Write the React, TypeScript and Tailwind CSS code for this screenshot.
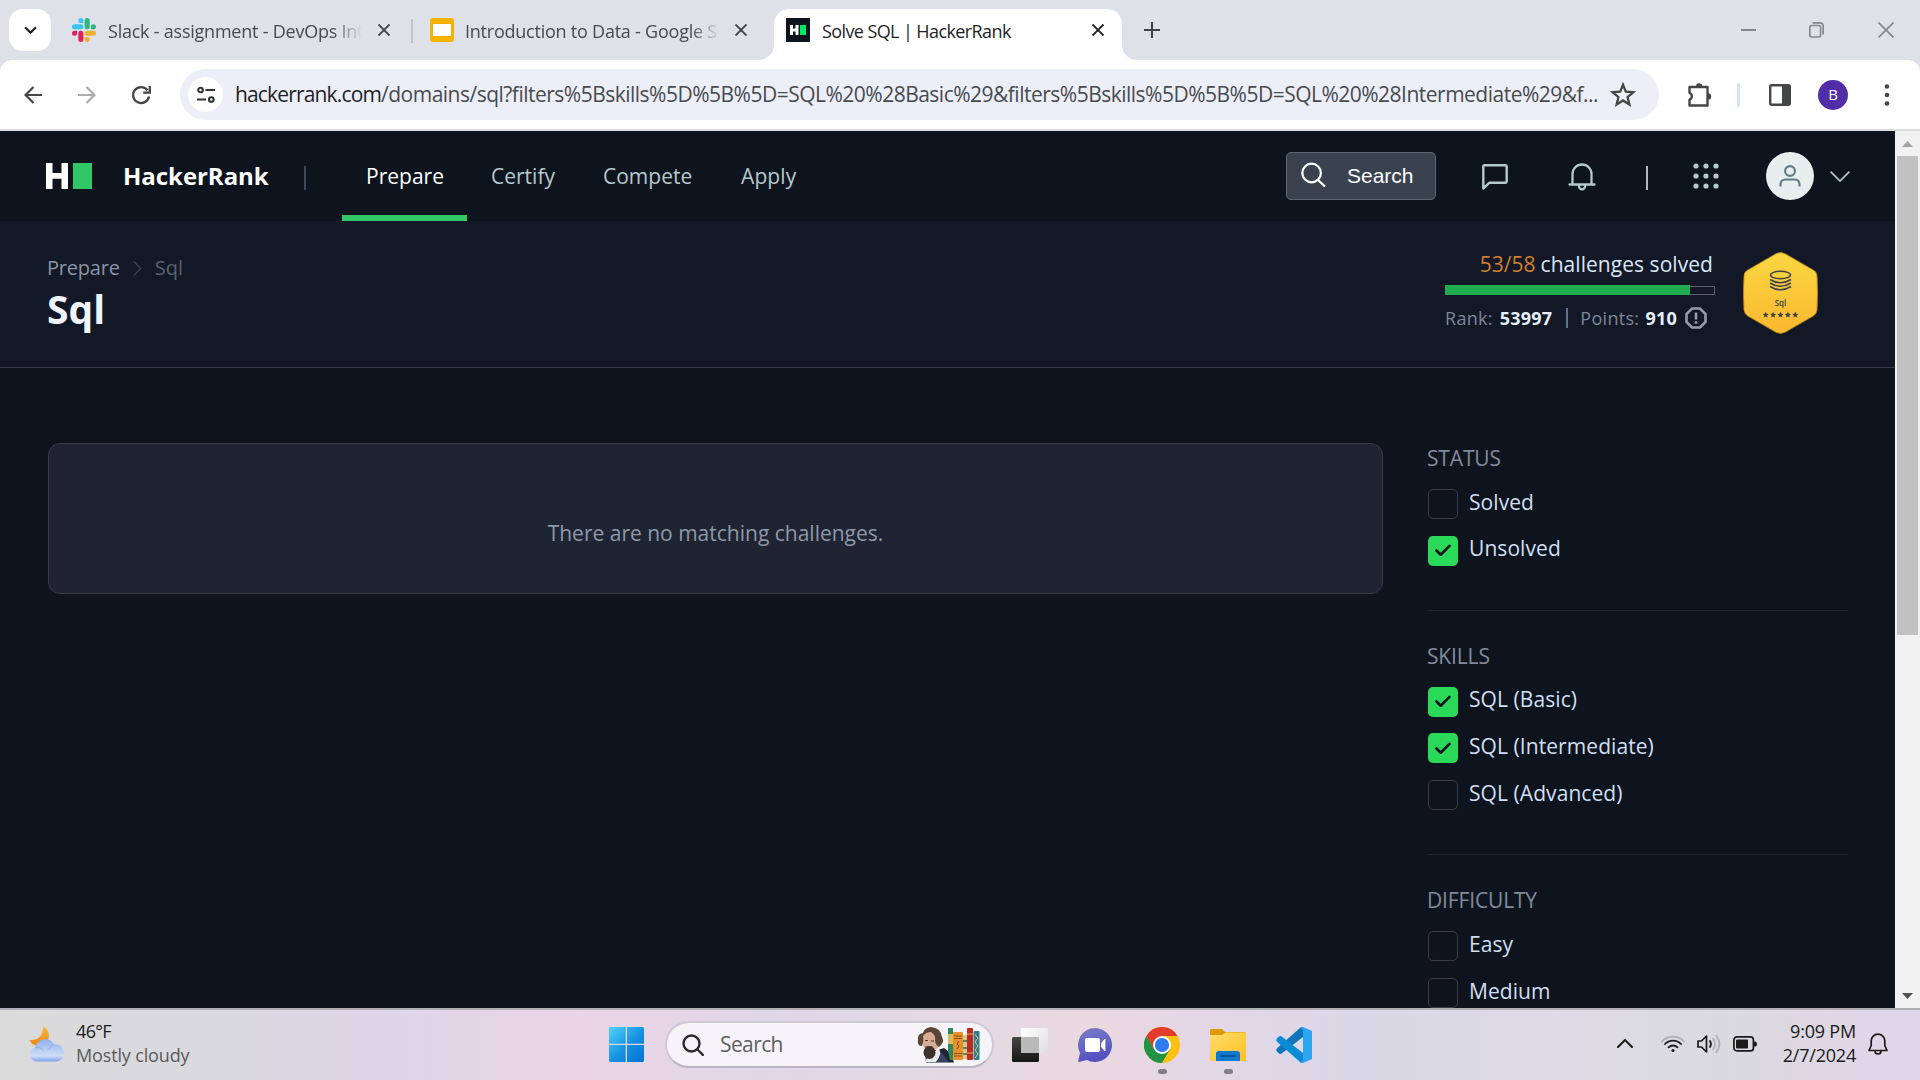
import type { ReactNode } from "react";

function SlackIcon() {
  return (
    <svg viewBox="0 0 24 24" className="size-6 shrink-0">
      <path fill="#E01E5A" d="M5.042 15.165a2.528 2.528 0 0 1-2.52 2.523A2.528 2.528 0 0 1 0 15.165a2.527 2.527 0 0 1 2.522-2.52h2.52v2.52zM6.313 15.165a2.527 2.527 0 0 1 2.521-2.52 2.527 2.527 0 0 1 2.521 2.52v6.313A2.528 2.528 0 0 1 8.834 24a2.528 2.528 0 0 1-2.521-2.522v-6.313z" />
      <path fill="#36C5F0" d="M8.834 5.042a2.528 2.528 0 0 1-2.521-2.52A2.528 2.528 0 0 1 8.834 0a2.528 2.528 0 0 1 2.521 2.522v2.52H8.834zM8.834 6.313a2.528 2.528 0 0 1 2.521 2.521 2.528 2.528 0 0 1-2.521 2.521H2.522A2.528 2.528 0 0 1 0 8.834a2.528 2.528 0 0 1 2.522-2.521h6.312z" />
      <path fill="#2EB67D" d="M18.956 8.834a2.528 2.528 0 0 1 2.522-2.521A2.528 2.528 0 0 1 24 8.834a2.528 2.528 0 0 1-2.522 2.521h-2.522V8.834zM17.688 8.834a2.528 2.528 0 0 1-2.523 2.521 2.527 2.527 0 0 1-2.52-2.521V2.522A2.527 2.527 0 0 1 15.165 0a2.528 2.528 0 0 1 2.523 2.522v6.312z" />
      <path fill="#ECB22E" d="M15.165 18.956a2.528 2.528 0 0 1 2.523 2.522A2.528 2.528 0 0 1 15.165 24a2.527 2.527 0 0 1-2.52-2.522v-2.522h2.52zM15.165 17.688a2.527 2.527 0 0 1-2.52-2.523 2.526 2.526 0 0 1 2.52-2.52h6.313A2.527 2.527 0 0 1 24 15.165a2.528 2.528 0 0 1-2.522 2.523h-6.313z" />
    </svg>
  );
}

function CloseX({ color }: { color: string }) {
  return (
    <svg viewBox="0 0 12 12" className="size-3 shrink-0" fill="none" stroke={color} strokeWidth="1.9">
      <path d="M0.5 0.5 11.5 11.5M11.5 0.5 0.5 11.5" />
    </svg>
  );
}

function TabStrip() {
  return (
    <div className="flex h-[60px] shrink-0 bg-[#dee1e8] text-[18px] text-[#484a4c]">
      <div className="ml-[9px] mt-[9px] flex h-[42px] w-[42px] items-center justify-center rounded-[14px] bg-white">
        <svg viewBox="0 0 14 10" className="h-[9px] w-[13px]" fill="none" stroke="#1f1f1f" strokeWidth="2.4">
          <path d="M1 1.5 7 7.5 13 1.5" />
        </svg>
      </div>
      <div className="ml-[21px] flex h-[60px] w-[339px] items-center">
        <SlackIcon />
        <div className="ml-[12px] mt-[2px] w-[256px] whitespace-pre tracking-[-0.23px] [mask-image:linear-gradient(to_right,#000_225px,transparent_254px)]">
          Slack - assignment - DevOps Int
        </div>
        <div className="ml-[14px] flex"><CloseX color="#3f4143" /></div>
      </div>
      <div className="mt-[19px] h-6 w-[2px] bg-[#c2c5cb]" />
      <div className="ml-[17px] flex h-[60px] w-[329px] items-center">
        <div className="h-6 w-6 shrink-0 rounded-[3px] bg-[#f6b400] px-[3px] pt-[6px]">
          <div className="h-[12px] bg-white shadow-[0_0_1px_#c98f00]" />
        </div>
        <div className="ml-[11px] mt-[2px] w-[256px] whitespace-pre tracking-[-0.23px] [mask-image:linear-gradient(to_right,#000_225px,transparent_256px)]">
          Introduction to Data - Google S
        </div>
        <div className="ml-[14px] flex"><CloseX color="#3f4143" /></div>
      </div>
      <div className="flex items-end text-[#1f1f1f]">
        <svg viewBox="0 0 15 15" className="size-[15px]"><path d="M15 0V15H0A15 15 0 0 0 15 0Z" fill="#fff" /></svg>
        <div className="flex h-[51px] w-[348px] items-center rounded-t-[15px] bg-white pb-[9px] pl-3">
          <div className="flex h-6 w-6 items-center bg-[#0e141e] pl-1">
            <svg viewBox="0 0 17 10" className="h-[10px] w-[17px]">
              <path d="M0 0H3V3.5H5.5V0H8.5V10H5.5V6.5H3V10H0Z" fill="#fff" />
              <path d="M10 0H16V10H10Z" fill="#00ea64" />
            </svg>
          </div>
          <div className="ml-[12px] mt-[2px] w-[270px] whitespace-pre tracking-[-0.6px]">Solve SQL | HackerRank</div>
          <CloseX color="#1f1f1f" />
        </div>
        <svg viewBox="0 0 15 15" className="size-[15px]"><path d="M0 0V15H15A15 15 0 0 1 0 0Z" fill="#fff" /></svg>
      </div>
      <svg viewBox="0 0 16 16" className="ml-[7px] mt-[22px] size-4" stroke="#3f4143" strokeWidth="2.1"><path d="M8 0V16M0 8H16" /></svg>
      <div className="ml-auto flex w-[179px] items-center pb-px text-[#83868b]">
        <svg viewBox="0 0 15 2" className="h-[2px] w-[15px]"><path d="M0 0H15V2H0Z" fill="#83868b" /></svg>
        <svg viewBox="0 0 15 16" className="ml-[53px] h-4 w-[15px]" fill="none" stroke="#83868b" strokeWidth="1.6">
          <rect x="0.8" y="3.5" width="10.8" height="11.5" rx="2" />
          <path d="M3.5 0.9H10.5Q14.2 0.9 14.2 4.5V12.5" />
        </svg>
        <svg viewBox="0 0 16 16" className="ml-[54px] size-4" fill="none" stroke="#83868b" strokeWidth="1.6"><path d="M0.5 0.5 15.5 15.5M15.5 0.5 0.5 15.5" /></svg>
      </div>
    </div>
  );
}

function Toolbar() {
  return (
    <div className="h-[71px] shrink-0 border-b-2 border-[#dcdddf] bg-[#dee1e8] text-[21px]">
      <div className="flex h-[69px] items-center rounded-t-[12px] bg-white">
        <svg viewBox="0 0 18 18" className="ml-6 size-[18px]" fill="none" stroke="#444746" strokeWidth="2.2"><path d="M18 9H2M9.5 1 1.5 9l8 8" /></svg>
        <svg viewBox="0 0 18 18" className="ml-9 size-[18px]" fill="none" stroke="#acadae" strokeWidth="2.2"><path d="M0 9H16M8.500 1 16.500 9l-8 8" /></svg>
        <svg viewBox="0 0 20 20" className="ml-[35px] size-5" fill="none" stroke="#444746" strokeWidth="2.3"><path d="M18 11.500A8 8 0 1 1 16.500 5.200M18.800 1V7.700H12.200" /></svg>
        <div className="ml-[29px] flex h-[51px] w-[1479px] items-center rounded-full bg-[#eceef8] pl-2">
          <div className="flex size-[35px] shrink-0 items-center justify-center rounded-full bg-white">
            <svg viewBox="0 0 18 18" className="size-[18px]" fill="none" stroke="#2f3133" strokeWidth="2.100">
              <circle cx="3.500" cy="4" r="2.300" /><path d="M8.500 4H18M0 13.500H9" /><circle cx="14.300" cy="13.500" r="2.300" />
            </svg>
          </div>
          <div className="ml-3 flex w-[1370px] whitespace-pre text-[#494b4e]">
            <span className="tracking-[-0.84px] text-[#1f1f1f]">hackerrank.com</span>
            <span className="tracking-[-0.51px]">/domains/sql?filters%5Bskills%5D%5B%5D=SQL%20%28Basic%29&amp;filters%5Bskills%5D%5B%5D=SQL%20%28Intermediate%29&amp;f...</span>
          </div>
          <svg viewBox="0 0 24 24" className="ml-[5px] h-[26px] w-[26px] shrink-0" fill="none" stroke="#444746" strokeWidth="2.100" strokeLinejoin="miter">
            <path d="M12 2.500 14.600 8.900 21.500 9.400 16.200 13.900 17.900 20.700 12 17 6.100 20.700 7.800 13.900 2.500 9.400 9.400 8.900Z" />
          </svg>
        </div>
        <svg viewBox="0 0 26 26" className="ml-[28px] size-[26px]" fill="none" stroke="#444746" strokeWidth="2.400" strokeLinejoin="round">
          <path d="M2.500 5H20.500V23.500H2.500V17.500A3.600 3.600 0 0 0 2.500 10.800Z" />
          <path d="M9 4.500A3.200 3.200 0 0 1 15.400 4.500ZM21 11.200A3.200 3.200 0 0 1 21 17.600Z" fill="#444746" stroke="none" />
        </svg>
        <div className="ml-[24px] h-6 w-[3px] rounded-full bg-[#d3e3fd]" />
        <svg viewBox="0 0 22 22" className="ml-[29px] size-[22px]" fill="none" stroke="#444746" strokeWidth="2.400">
          <rect x="1.200" y="1.200" width="19.600" height="19.600" rx="1.500" /><path d="M13 1H20.500V21H13Z" fill="#444746" stroke="none" />
        </svg>
        <div className="ml-[27px] flex size-[30px] items-center justify-center rounded-full bg-[#512da8] text-[15px] text-white">B</div>
        <svg viewBox="0 0 6 22" className="ml-[36px] h-[22px] w-[6px]" fill="#444746"><circle cx="3" cy="2.500" r="2.300" /><circle cx="3" cy="11" r="2.300" /><circle cx="3" cy="19.500" r="2.300" /></svg>
      </div>
    </div>
  );
}

function NavBar() {
  return (
    <div className="flex h-[90px] shrink-0 items-center bg-[#0e141e] text-[21px] text-[#b7c9cc]">
      <svg viewBox="0 0 46 26" className="ml-[46px] h-[26px] w-[46px]">
        <path d="M0 0H6.500V10H15.500V0H22V26H15.500V15.800H6.500V26H0Z" fill="#fff" />
        <path d="M27 0H46V26H27Z" fill="#32c766" />
      </svg>
      <div className="ml-[31px] w-[146px] text-[24px] font-bold tracking-[-0.050px] text-white">HackerRank</div>
      <div className="ml-[35px] mt-[4px] h-6 w-[2px] bg-[#3b4a58]" />
      <div className="ml-9 flex h-[90px] w-[125px] items-center justify-center border-b-[6px] border-[#32c766] pl-px pt-[8px] text-white">Prepare</div>
      <div className="ml-6 w-[64px] pt-[2px]">Certify</div>
      <div className="ml-[48px] w-[91px] pt-[2px]">Compete</div>
      <div className="ml-[47px] pt-[2px] tracking-[0.100px]">Apply</div>
      <div className="ml-auto flex h-12 w-[150px] items-center rounded-[5px] border border-[#5b6874] bg-[#39424e] font-['Liberation_Sans'] text-white">
        <svg viewBox="0 0 25 25" className="mb-[3px] ml-[14px] size-[25px]" fill="none" stroke="#fff" strokeWidth="2.200"><circle cx="10.600" cy="11" r="9.300" /><path d="M17 18 24 24.500" /></svg>
        <span className="ml-[21px]">Search</span>
      </div>
      <svg viewBox="0 0 26 28" className="ml-[46px] mt-[2px] h-7 w-[26px]" fill="none" stroke="#b7c9cc" strokeWidth="2.400" strokeLinejoin="round"><path d="M1.300 25.500V3.500Q1.300 2.300 2.500 2.300H23.500Q24.700 2.300 24.700 3.500V18.500Q24.700 19.700 23.500 19.700H7.500Z" /></svg>
      <svg viewBox="0 0 28 28" className="ml-[60px] mt-px size-7" fill="none" stroke="#b7c9cc" strokeWidth="2.300" strokeLinejoin="round" strokeLinecap="round">
        <path d="M1.500 21.500H26.500M4.500 21V11A9.500 9.500 0 0 1 23.500 11V21M10.800 22.500A3.200 3.800 0 0 0 17.200 22.500" />
      </svg>
      <div className="ml-[50px] mt-[4px] h-6 w-[2px] bg-[#a9bcc4]" />
      <svg viewBox="0 0 26 26" className="ml-[45px] size-[26px]" fill="#b7c9cc">
        {[3, 13, 23].map((y) => [3, 13, 23].map((x) => <circle key={`${x}-${y}`} cx={x} cy={y} r="2.600" />))}
      </svg>
      <div className="ml-[47px] flex size-12 items-center justify-center rounded-full bg-[#e7eeef]">
        <svg viewBox="0 0 22 24" className="h-6 w-[22px]" fill="none" stroke="#647b83" strokeWidth="2.100"><circle cx="11" cy="7" r="4.900" /><path d="M1.500 22.500V20.500Q1.500 15.500 6.500 15.500H15.500Q20.500 15.500 20.500 20.500V22.500" /></svg>
      </div>
      <svg viewBox="0 0 20 11" className="ml-4 mr-[45px] h-[11px] w-5" fill="none" stroke="#b7c9cc" strokeWidth="1.700"><path d="M0.600 0.600 10 10 19.400 0.600" /></svg>
    </div>
  );
}

function Badge() {
  return (
    <div className="relative flex h-[82px] w-[75px] flex-col items-center">
      <svg viewBox="0 0 75 82" className="absolute inset-0 h-[82px] w-[75px]">
        <defs><linearGradient id="gold" x1="0" y1="0" x2="0" y2="1"><stop offset="0" stopColor="#fbd741" /><stop offset="1" stopColor="#f9b830" /></linearGradient></defs>
        <path d="M33 1.700Q37.500-0.500 42 1.700L71 18.500Q74 20.500 74 24Q75 41 74 58Q73.500 61.500 71 63.500L42 80.300Q37.500 82.500 33 80.300L4 63.500Q1.500 61.500 1 58Q0 41 1 24Q1 20.500 4 18.500Z" fill="url(#gold)" stroke="#b98a1c" strokeWidth="0.800" />
        <g fill="none" stroke="#39424e" strokeWidth="1.500">
          <ellipse cx="37.500" cy="23" rx="10" ry="3.700" />
          <path d="M27 27.500Q37.500 34 48 27.500M27 31Q37.500 37.500 48 31M27 34.500Q37.500 41 48 34.500" />
        </g>
        <g fill="#39424e">
          {[22.700, 30.100, 37.500, 44.900, 52.300].map((x) => (
            <path key={x} transform={`translate(${x} 62.800)`} d="M0-3 0.900-1 3-0.800 1.400 0.600 1.900 2.700 0 1.600-1.900 2.700-1.400 0.600-3-0.800-0.900-1Z" />
          ))}
        </g>
      </svg>
      <span className="relative mt-[45px] text-[8px] leading-[11px] font-semibold text-[#39424e]">Sql</span>
    </div>
  );
}

function Header() {
  return (
    <div className="flex h-[147px] shrink-0 justify-between border-b border-[#393b46] bg-[#121826]">
      <div className="pl-[47px] pt-[32px]">
        <div className="flex h-[30px] items-center text-[20px] text-[#8a93a6]">
          <span className="tracking-[-0.200px]">Prepare</span>
          <svg viewBox="0 0 9 16" className="ml-[13px] h-[15px] w-[9px]" fill="none" stroke="#414858" strokeWidth="1.300"><path d="M0.600 0.600 8 8 0.600 15.400" /></svg>
          <span className="ml-[13px] text-[#596171]">Sql</span>
        </div>
        <h1 className="text-[39px] leading-[52px] font-bold text-[#f0f4fb]">Sql</h1>
      </div>
      <div className="flex pr-[77px]">
        <div className="w-[270px] pt-[28px]">
          <div className="flex h-[30px] justify-end whitespace-pre pr-[2px] text-[21px] leading-[30px] text-[#d9e6f7]">
            <span className="text-[#cd7f32]">53/58</span> <span className="ml-[5px] tracking-[0.050px]">challenges solved</span>
          </div>
          <div className="mt-[6px] flex h-[10px] items-center">
            <div className="h-[10px] w-[245px] bg-[#1fab4f]" />
            <div className="h-[9px] w-[25px] border border-l-0 border-[#5d6170]" />
          </div>
          <div className="mt-[10px] flex h-[26px] items-center whitespace-pre text-[18px] text-[#7d879b]">
            <span className="tracking-[0.300px]">Rank:</span>
            <b className="ml-[7px] tracking-[0.200px] text-[#e6effb]">53997</b>
            <span className="ml-[14px] h-5 w-[2px] bg-[#5f718c]" />
            <span className="ml-[12px] tracking-[0.300px]">Points:</span>
            <b className="ml-[6px] tracking-[0.300px] text-[#e6effb]">910</b>
            <svg viewBox="0 0 22 22" className="ml-[8px] size-[22px]" fill="none" stroke="#939cac" strokeWidth="2.600"><path d="M7 1.500H15L20.500 7V15L15 20.500H7L1.500 15V7Z" /><path d="M11 5.500V12.500M11 14.300V16.800" /></svg>
          </div>
        </div>
        <div className="ml-[28px] pt-[31px]"><Badge /></div>
      </div>
    </div>
  );
}

function Check({ label, on }: { label: string; on?: boolean }) {
  return (
    <div className="flex h-[30px] shrink-0 items-center">
      {on ? (
        <div className="flex size-[30px] items-center justify-center rounded-[5px] bg-[#2bd959]">
          <svg viewBox="0 0 18 14" className="h-[13px] w-[18px]" fill="none" stroke="#0e141e" strokeWidth="2.900" strokeLinecap="round" strokeLinejoin="round"><path d="M2 7 6.500 11.500 16 2" /></svg>
        </div>
      ) : (
        <div className="size-[30px] rounded-[5px] border border-[#393b46]" />
      )}
      <span className="ml-[11px] pb-[3px] tracking-[0.070px] text-[#d0dff2]">{label}</span>
    </div>
  );
}

function Group({ title, first, last, children }: { title: string; first?: boolean; last?: boolean; children: ReactNode }) {
  return (
    <div className={first ? "" : "pt-[30px]"}>
      <div className="-ml-px h-7 pt-px leading-7 tracking-[-0.150px] text-[#838b9a]">{title}</div>
      <div className={last ? "mt-[18px] flex flex-col gap-[16.700px]" : "mt-[18px] flex flex-col gap-[16.700px] border-b border-[#1f2634] pb-[44px]"}>{children}</div>
    </div>
  );
}

function Page() {
  return (
    <div className="flex w-[1895px] flex-col bg-[#0e141e]">
      <NavBar />
      <Header />
      <div className="flex min-h-0 flex-1 overflow-hidden pl-12 pt-[75px] text-[21px]">
        <div className="flex h-[151px] w-[1335px] items-center justify-center rounded-[12px] border border-[#393b46] bg-[#1e2431] pt-[31px] text-[#8f98a9]">
          There are no matching challenges.
        </div>
        <div className="ml-[45px] h-fit w-[420px]">
          <Group title="STATUS" first>
            <Check label="Solved" />
            <Check label="Unsolved" on />
          </Group>
          <Group title="SKILLS">
            <Check label="SQL (Basic)" on />
            <Check label="SQL (Intermediate)" on />
            <Check label="SQL (Advanced)" />
          </Group>
          <Group title="DIFFICULTY" last>
            <Check label="Easy" />
            <Check label="Medium" />
          </Group>
        </div>
      </div>
    </div>
  );
}

function Scrollbar() {
  return (
    <div className="flex w-[25px] flex-col items-center bg-[#f1f1f1]">
      <svg viewBox="0 0 11 6" className="mt-[10px] h-[6px] w-[11px]" fill="#a3a3a3"><path d="M5.500 0 11 6H0Z" /></svg>
      <div className="mt-[9px] h-[479px] w-[21px] bg-[#c1c1c1]" />
      <svg viewBox="0 0 11 6" className="mb-[9px] mt-auto h-[6px] w-[11px]" fill="#505050"><path d="M5.500 6 11 0H0Z" /></svg>
    </div>
  );
}

function Weather() {
  return (
    <svg viewBox="0 0 36 36" className="size-9">
      <defs>
        <linearGradient id="moon" x1="0" y1="0" x2="0" y2="1"><stop offset="0" stopColor="#f5c04a" /><stop offset="1" stopColor="#f08210" /></linearGradient>
        <linearGradient id="cloud" x1="0" y1="0" x2="0" y2="1"><stop offset="0" stopColor="#8fb0ec" /><stop offset="0.750" stopColor="#cfdef6" /><stop offset="1" stopColor="#7ba0ee" /></linearGradient>
      </defs>
      <path d="M14 0Q22 5 19.500 13Q16 20 7 19.500Q2 18 0.500 14Q14 15 14 0Z" fill="url(#moon)" />
      <path d="M7.500 35.500A7.300 7.300 0 0 1 6.500 21.200A10 10 0 0 1 25 18.300A8.700 8.700 0 0 1 28 35.500Z" fill="url(#cloud)" />
      <path d="M6.500 21.200A7.500 7.500 0 0 1 14 24.500M25 18.300Q21 20 20 23.500" fill="none" stroke="#83a4e4" strokeWidth="0.900" />
    </svg>
  );
}

function DickensArt() {
  return (
    <svg viewBox="0 0 63 37" className="h-[37px] w-[63px]">
      <path d="M8 24H21L27 22Q35 27 37 36.500H9Z" fill="#1f2435" />
      <path d="M18 25 22 22 24 29 19 36H8L10 32Z" fill="#ece8ec" />
      <path d="M20 36 24 26 32 36Z" fill="#3b4360" />
      <path d="M5 8Q13 0 22 6L23 19Q18 27 9 24Q4 20 5 8Z" fill="#d9ad95" />
      <path d="M1 14Q0 8 6 7Q7 2 14 1Q24 2 25 11Q28 16 22 21Q18 19 18 14Q19 9 14 6Q9 6 6 10Q7 14 5 20Q0 20 1 14Z" fill="#5a4537" />
      <ellipse cx="12.500" cy="26.500" rx="6" ry="6.500" fill="#3d332b" />
      <path d="M8 14.500H11M14 15H17M8 21H16" stroke="#4b3429" strokeWidth="1.200" />
      <path d="M31 2H36V34H33L31 25Z" fill="#2c8a61" /><path d="M31 8H36V18H31Z" fill="#d8bd60" />
      <rect x="36" y="6" width="10" height="28" rx="1" fill="#e8902d" />
      <path d="M37 10H45M37 30H45M37 27.500H45M37 12.500H45" stroke="#79451b" strokeWidth="0.800" /><path d="M42 15 40 18 42 20 40 23" stroke="#79451b" fill="none" />
      <rect x="46" y="9" width="4" height="24" fill="#d9c88c" /><path d="M46 15H50M46 22H50M46 28H50" stroke="#4b8a67" strokeWidth="2" />
      <rect x="50" y="2" width="6" height="32" rx="1" fill="#bd2a22" /><path d="M50 8H56M50 27H56" stroke="#e6ad48" strokeWidth="1.200" />
      <rect x="56.500" y="5" width="6" height="29" rx="1" fill="#2f8088" /><path d="M57.500 8 61 12 58 16 61 20 58 24 61 28 58 32" stroke="#d3c481" fill="none" />
    </svg>
  );
}

function Taskbar() {
  return (
    <div className="flex h-[72px] shrink-0 items-center border-t-2 border-[#b3afb6] bg-[linear-gradient(90deg,#dbdbdb_0px,#d9d9df_200px,#ddd6e7_380px,#ead4e6_580px,#ded8e6_800px,#ead9e0_1090px,#e3d6e7_1210px,#dad8e6_1360px,#dedae6_1560px,#dadade_1720px,#dfd7e7_1860px,#dfd7e7_1920px)] pb-px text-[18px] text-[#1b1b1b]">
      <div className="ml-[29px] flex w-[580px] items-center">
        <div className="pb-[2px]"><Weather /></div>
        <div className="ml-[11px] pb-[3px] leading-[24px] whitespace-pre">
          <div className="tracking-[-0.650px]">46°F</div>
          <div className="tracking-[-0.150px] text-[#5a5a5d]">Mostly cloudy</div>
        </div>
      </div>
      <svg viewBox="0 0 35 35" className="size-[35px]">
        <defs><linearGradient id="win" x1="0" y1="0" x2="1" y2="1"><stop offset="0" stopColor="#4fd3ff" /><stop offset="0.550" stopColor="#1690e0" /><stop offset="1" stopColor="#0473d3" /></linearGradient></defs>
        <path d="M1 0H16.700V16.700H0V1ZM18 0H34L35 1V16.700H18ZM0 18H16.700V35H1L0 34ZM18 18H35V34L34 35H18Z" fill="url(#win)" />
      </svg>
      <div className="ml-[21px] flex h-[47px] w-[329px] items-center rounded-full border-2 border-b-[#b9b4bf] border-l-[#cfc9d5] border-r-[#cfc9d5] border-t-[#cfc9d5] bg-[#f6f4f9] text-[21px] text-[#5e5e61]">
        <svg viewBox="0 0 22 22" className="ml-[15px] size-[22px]" fill="none" stroke="#2b2b2b" strokeWidth="2.400" strokeLinecap="round"><circle cx="9.500" cy="9.500" r="8" /><path d="M15.500 15.500 20.800 20.800" /></svg>
        <span className="ml-[16px] w-[197px] tracking-[-0.600px]">Search</span>
        <DickensArt />
      </div>
      <svg viewBox="0 0 36 34" className="ml-[18px] h-[34px] w-9">
        <defs>
          <linearGradient id="dk" x1="0" y1="0" x2="0" y2="1"><stop offset="0" stopColor="#484746" /><stop offset="1" stopColor="#161616" /></linearGradient>
          <linearGradient id="lt" x1="0" y1="0" x2="1" y2="1"><stop offset="0" stopColor="#fff" /><stop offset="1" stopColor="#dedede" /></linearGradient>
        </defs>
        <rect y="9" width="27" height="25" rx="1.500" fill="url(#dk)" />
        <rect x="9" width="27" height="25" rx="1.500" fill="url(#lt)" />
        <path d="M9 9H27V25H10.500Q9 25 9 23.500Z" fill="#b9b9b9" />
      </svg>
      <svg viewBox="0 0 34 34" className="ml-[30px] size-[34px]">
        <defs><linearGradient id="chat" x1="0" y1="0" x2="0.300" y2="1"><stop offset="0" stopColor="#8a66b0" /><stop offset="0.250" stopColor="#7175c8" /><stop offset="1" stopColor="#5450be" /></linearGradient></defs>
        <path d="M17 0A17 17 0 1 1 9 32L1 34Q0 34 0.200 33L2 25A17 17 0 0 1 17 0Z" fill="url(#chat)" />
        <rect x="7" y="10" width="15" height="14" rx="2" fill="#fff" /><path d="M23.500 15 27 11V23L23.500 19Z" fill="#fff" stroke="#fff" strokeWidth="0.800" strokeLinejoin="round" />
      </svg>
      <div className="relative ml-8 flex size-9">
        <svg viewBox="0 0 48 48" className="size-9">
          <circle cx="24" cy="24" r="24" fill="#fdc111" />
          <path d="M24 12H44.800A24 24 0 0 0 3.200 12L13.600 30Z" fill="#e33b2e" />
          <path d="M3.200 12A24 24 0 0 0 24 48L34.400 30 13.600 30Z" fill="#219344" />
          <circle cx="24" cy="24" r="12" fill="#fff" /><circle cx="24" cy="24" r="9.500" fill="#2f7bf0" />
        </svg>
        <span className="absolute left-[14px] top-[42px] h-[5px] w-[9px] rounded-full bg-[#837d88]" />
      </div>
      <div className="relative ml-[30px] flex size-9">
        <svg viewBox="0 0 36 36" className="size-9">
          <defs><linearGradient id="fold" x1="0" y1="0" x2="1" y2="1"><stop offset="0" stopColor="#ffdc6b" /><stop offset="1" stopColor="#fcc226" /></linearGradient></defs>
          <path d="M0 3.500Q0 2 1.500 2H12L15 5H34Q36 5 36 7V12H0Z" fill="#dd9c05" />
          <path d="M0 8H12L15.500 5.500H35L36 6.500V34H0Z" fill="url(#fold)" />
          <path d="M6 34V27Q6 24 9 24H27Q30 24 30 27V34Z" fill="#0f79cf" /><path d="M10.500 29H25.500" stroke="#0b4f95" strokeWidth="1.800" />
        </svg>
        <span className="absolute left-[14px] top-[42px] h-[5px] w-[9px] rounded-full bg-[#837d88]" />
      </div>
      <svg viewBox="0 0 108 108" className="ml-[30px] size-9">
        <path d="M81 0 81 30 18 79Q12 83 8 79L2 73Q-1 68 4 63L72 3Q76-1 81 0Z" fill="#0f74b8" />
        <path d="M81 108 81 78 18 29Q12 25 8 29L2 35Q-1 40 4 45L72 105Q76 109 81 108Z" fill="#0b8bd6" />
        <path d="M81 0 108 12V96L81 108Q76 109 72 105 81 104 81 98V10Q81 4 72 3 76-1 81 0Z" fill="#2aa6f3" />
      </svg>
      <div className="ml-auto flex items-center">
        <svg viewBox="0 0 16 9" className="mb-[2px] h-[9px] w-4" fill="none" stroke="#1b1b1b" strokeWidth="2" strokeLinecap="round"><path d="M1 8 8 1 15 8" /></svg>
        <svg viewBox="0 0 24 18" className="mb-px ml-[28px] h-[18px] w-6" fill="none" stroke="#1b1b1b" strokeWidth="1.800" strokeLinecap="round">
          <path d="M1 6.500A15 15 0 0 1 23 6.500" stroke="#b0aeb3" /><path d="M4 9A11 11 0 0 1 20 9" /><path d="M7.500 12.300A6.500 6.500 0 0 1 16.500 12.300" /><circle cx="12" cy="15.500" r="1.600" fill="#1b1b1b" stroke="none" />
        </svg>
        <svg viewBox="0 0 24 20" className="mb-px ml-[12px] h-5 w-6" fill="none" stroke="#1b1b1b" strokeWidth="1.700" strokeLinejoin="round" strokeLinecap="round">
          <path d="M1 7H4.500L9.500 2V18L4.500 13H1Z" /><path d="M13 7Q15 10 13 13" /><path d="M16 4.500Q20 10 16 15.500M19 1.500Q26 10 19 18.500" stroke="#b0aeb3" />
        </svg>
        <svg viewBox="0 0 24 16" className="mb-px ml-[12px] h-4 w-6"><rect x="0.900" y="0.900" width="19.500" height="14" rx="3" fill="none" stroke="#1b1b1b" strokeWidth="1.700" /><rect x="3" y="3.500" width="12" height="9" rx="0.800" fill="#1b1b1b" /><path d="M21 5.500H22.500Q24 6 24 8T22.500 10.500H21Z" fill="#1b1b1b" /></svg>
        <div className="ml-[25px] w-[74px] pb-[3px] text-right leading-[24px] whitespace-pre">
          <div className="tracking-[-0.200px]">9:09 PM</div>
          <div className="tracking-[-0.200px]">2/7/2024</div>
        </div>
        <svg viewBox="0 0 20 22" className="mb-px ml-[12px] mr-[32px] h-[22px] w-5" fill="none" stroke="#1b1b1b" strokeWidth="1.700" strokeLinejoin="round"><path d="M1 17.500 3.200 12.500V8A6.800 6.800 0 0 1 16.800 8V12.500L19 17.500ZM7 18A3 3 0 0 0 13 18" /></svg>
      </div>
    </div>
  );
}

export default function App() {
  return (
    <div className="flex h-[1080px] w-[1920px] flex-col overflow-hidden bg-white font-['Open_Sans','Noto_Sans',sans-serif]">
      <TabStrip />
      <Toolbar />
      <div className="flex min-h-0 flex-1">
        <Page />
        <Scrollbar />
      </div>
      <Taskbar />
    </div>
  );
}
